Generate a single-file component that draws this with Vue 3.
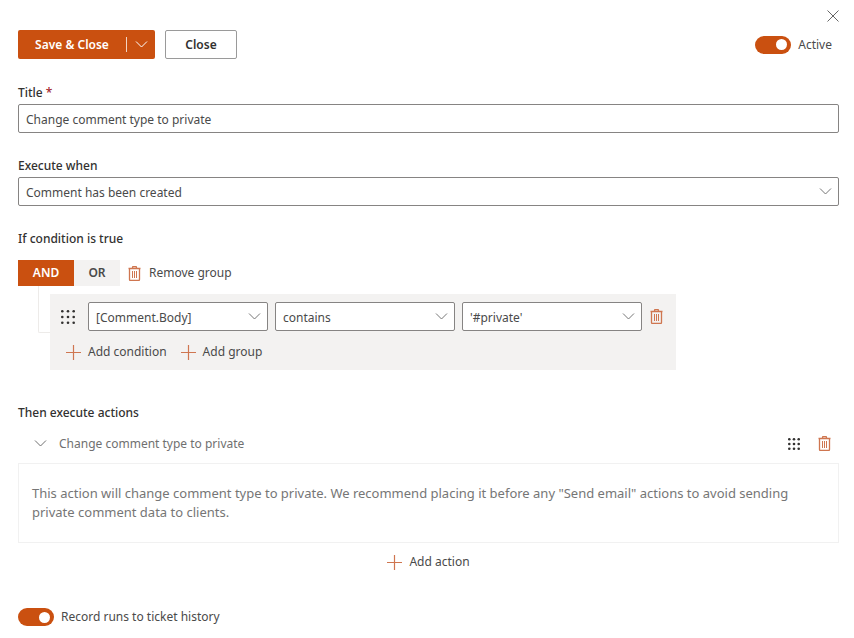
<script setup>
import { ref, h } from 'vue'

const title = ref('Change comment type to private')
const trigger = ref('Comment has been created')
const active = ref(true)
const record = ref(true)
const mode = ref('AND')
const modes = ['AND', 'OR']
const fields = [
  { label: 'Field', value: '[Comment.Body]' },
  { label: 'Operator', value: 'contains' },
  { label: 'Value', value: "'#private'" }
]

const line = (d, props) =>
  h('svg', { fill: 'none', stroke: 'currentColor', 'aria-hidden': 'true', ...props }, [h('path', { d })])

const Chevron = () => line('M1 1.5 6.5 7 12 1.5', { width: 13, height: 9, viewBox: '0 0 13 9' })
const Plus = () =>
  line('M7.5 0v15M0 7.5h15', { width: 15, height: 15, viewBox: '0 0 15 15', 'stroke-width': 1.2 })
const Trash = () =>
  h(
    'svg',
    { width: 13, height: 15, viewBox: '0 0 13 15', fill: 'none', stroke: 'currentColor', 'aria-hidden': 'true' },
    [
      h('path', { d: 'M.5 2.5h12M4.5 2.5v-1q0-1 1-1h2q1 0 1 1v1M1.5 2.5v11q0 1 1 1h8q1 0 1-1v-11', 'stroke-width': 1.3 }),
      h('path', { d: 'M4.5 5v7M6.5 5v7M8.5 5v7' })
    ]
  )
const Dots = ({ size }) =>
  h(
    'svg',
    { width: size, height: size, viewBox: `0 0 ${size} ${size}`, fill: 'currentColor', 'aria-hidden': 'true' },
    [0, 1, 2].flatMap((r) =>
      [0, 1, 2].map((c) =>
        h('circle', { cx: 1.3 + (c * (size - 2.6)) / 2, cy: 1.3 + (r * (size - 2.6)) / 2, r: 1.3 })
      )
    )
  )
Dots.props = ['size']
</script>

<template>
  <form class="panel" @submit.prevent>
    <div class="titlebar">
      <button type="button" class="plain dismiss" aria-label="Dismiss">
        <svg width="12" height="12" viewBox="0 0 12 12" fill="none" stroke="currentColor">
          <path d="M.5.5l11 11M11.5.5l-11 11" />
        </svg>
      </button>
    </div>

    <header class="toolbar">
      <div class="split">
        <button type="submit" class="save">Save &amp; Close</button>
        <button type="button" class="more" aria-label="More save options"><Chevron /></button>
      </div>
      <button type="button" class="close">Close</button>
      <label class="toggle end">
        <input v-model="active" type="checkbox" role="switch" />
        <span>Active</span>
      </label>
    </header>

    <div class="field">
      <label class="caption" for="title">Title <span class="required">*</span></label>
      <input id="title" v-model="title" class="control" type="text" required />
    </div>

    <div class="field">
      <label class="caption" for="trigger">Execute when</label>
      <div class="dropdown">
        <select id="trigger" v-model="trigger" class="control">
          <option>Comment has been created</option>
        </select>
        <Chevron />
      </div>
    </div>

    <section>
      <h2 class="caption">If condition is true</h2>
      <div class="group-bar">
        <div class="modes">
          <button
            v-for="m in modes"
            :key="m"
            type="button"
            class="mode"
            :class="{ selected: mode === m }"
            @click="mode = m"
          >{{ m }}</button>
        </div>
        <button type="button" class="plain remove"><Trash /><span>Remove group</span></button>
      </div>
      <div class="tree">
        <div class="branch"></div>
        <div class="group">
          <div class="rule">
            <span class="grip"><Dots :size="14" /></span>
            <div v-for="f in fields" :key="f.label" class="dropdown">
              <select class="control" :aria-label="f.label">
                <option>{{ f.value }}</option>
              </select>
              <Chevron />
            </div>
            <button type="button" class="plain bin" aria-label="Delete condition"><Trash /></button>
          </div>
          <div class="adders">
            <button type="button" class="plain add"><Plus /><span>Add condition</span></button>
            <button type="button" class="plain add"><Plus /><span>Add group</span></button>
          </div>
        </div>
      </div>
    </section>

    <section class="actions">
      <h2 class="caption">Then execute actions</h2>
      <div class="action-head">
        <button type="button" class="plain expander"><Chevron /><span>Change comment type to private</span></button>
        <span class="grip"><Dots :size="12" /></span>
        <button type="button" class="plain bin" aria-label="Delete action"><Trash /></button>
      </div>
      <p class="note">
        This action will change comment type to private. We recommend placing it before any "Send email" actions to
        avoid sending private comment data to clients.
      </p>
      <div class="add-action">
        <button type="button" class="plain add"><Plus /><span>Add action</span></button>
      </div>
    </section>

    <label class="toggle">
      <input v-model="record" type="checkbox" role="switch" />
      <span>Record runs to ticket history</span>
    </label>
  </form>
</template>

<style>
body {
  background: #fff;
}
</style>

<style scoped>
.panel {
  --accent: #ca5010;
  --icon: #cf7650;
  padding: 6px 15px 11px 18px;
  color: #4a4a4a;
  font: 12px/20px 'Noto Sans', 'Open Sans', sans-serif;
}
.panel *,
.panel {
  box-sizing: border-box;
}
button,
input,
select {
  margin: 0;
  font: inherit;
  color: inherit;
}
button {
  cursor: pointer;
}
svg {
  display: block;
  flex: none;
}
.plain {
  display: flex;
  align-items: center;
  padding: 0;
  border: 0;
  background: none;
}
.titlebar {
  display: flex;
  justify-content: flex-end;
  height: 24px;
}
.dismiss {
  height: 20px;
  color: #666;
}
.toolbar {
  display: flex;
  align-items: center;
  gap: 10px;
  margin-bottom: 23px;
  font-weight: 600;
}
.split {
  display: flex;
  align-items: center;
  width: 137px;
  height: 29px;
  border-radius: 2px;
  background: var(--accent);
  color: #fff;
}
.save,
.more {
  padding: 0;
  border: 0;
  background: none;
}
.save {
  flex: 1;
}
.more {
  display: flex;
  align-items: center;
  justify-content: center;
  width: 29px;
  height: 15px;
  border-left: 1px solid #f3d3c2;
}
.close {
  width: 72px;
  height: 29px;
  padding: 0;
  border: 1px solid #9a9a9a;
  border-radius: 2px;
  background: #fff;
  color: #323130;
}
.toggle {
  display: flex;
  align-items: center;
  gap: 7px;
  font-weight: 400;
}
.end {
  margin-left: auto;
  padding-right: 7px;
}
.toggle input {
  display: flex;
  align-items: center;
  justify-content: flex-end;
  width: 36px;
  height: 18px;
  padding: 0 4px;
  border-radius: 9px;
  appearance: none;
  background: #8a8886;
}
.toggle input:not(:checked) {
  justify-content: flex-start;
}
.toggle input:checked {
  background: var(--accent);
}
.toggle input::before {
  content: '';
  width: 11px;
  height: 11px;
  border-radius: 50%;
  background: #fff;
}
.field {
  margin-bottom: 22px;
}
.caption {
  display: block;
  margin: 0;
  color: #323130;
  font-size: 12px;
  font-weight: 500;
  line-height: 22px;
}
.required {
  color: #a4262c;
}
.control {
  display: block;
  width: 100%;
  height: 29px;
  padding: 2px 7px 0;
  border: 1px solid #868483;
  border-radius: 2px;
  appearance: none;
  background: #fff;
}
.dropdown {
  display: grid;
  align-items: center;
}
.dropdown > * {
  grid-area: 1 / 1;
}
.dropdown svg {
  justify-self: end;
  margin-right: 7px;
  color: #777;
  pointer-events: none;
}
.group-bar {
  display: flex;
  align-items: center;
  gap: 8px;
  margin-top: 10px;
}
.modes {
  display: flex;
}
.mode {
  width: 46px;
  height: 26px;
  padding: 0;
  border: 0;
  background: #f3f2f1;
  font-weight: 600;
}
.mode:first-child {
  width: 56px;
}
.mode.selected {
  background: var(--accent);
  color: #fff;
}
.remove {
  gap: 8px;
}
.remove svg,
.bin,
.add svg {
  color: var(--icon);
}
.tree {
  display: flex;
  padding-left: 20px;
}
.branch {
  width: 12px;
  height: 47px;
  border: solid #edebe9;
  border-width: 0 0 1px 1px;
  border-radius: 0 0 0 2px;
}
.group {
  flex: 0 1 626px;
  margin-top: 8px;
  padding: 8px 13px 8px 11px;
  background: #f3f2f1;
}
.rule {
  display: flex;
  align-items: center;
  gap: 7px;
}
.rule .dropdown {
  flex: 1;
}
.grip {
  color: #323130;
}
.rule .grip {
  margin-right: 6px;
}
.rule .bin {
  margin-left: 1px;
}
.adders {
  display: flex;
  gap: 14px;
  margin-top: 11px;
  padding-left: 5px;
}
.add {
  gap: 7px;
}
.actions {
  margin-top: 32px;
}
.action-head {
  display: flex;
  align-items: center;
  gap: 18px;
  height: 39px;
  padding: 0 8px 0 16px;
}
.expander {
  gap: 12px;
  margin-right: auto;
  color: #707070;
}
.note {
  margin: 0;
  padding: 20px 13px;
  border: 1px solid #f1f1f1;
  color: #767676;
  font-size: 13px;
  line-height: 19px;
}
.add-action {
  display: flex;
  justify-content: center;
  margin: 9px 0 35px;
}
</style>
